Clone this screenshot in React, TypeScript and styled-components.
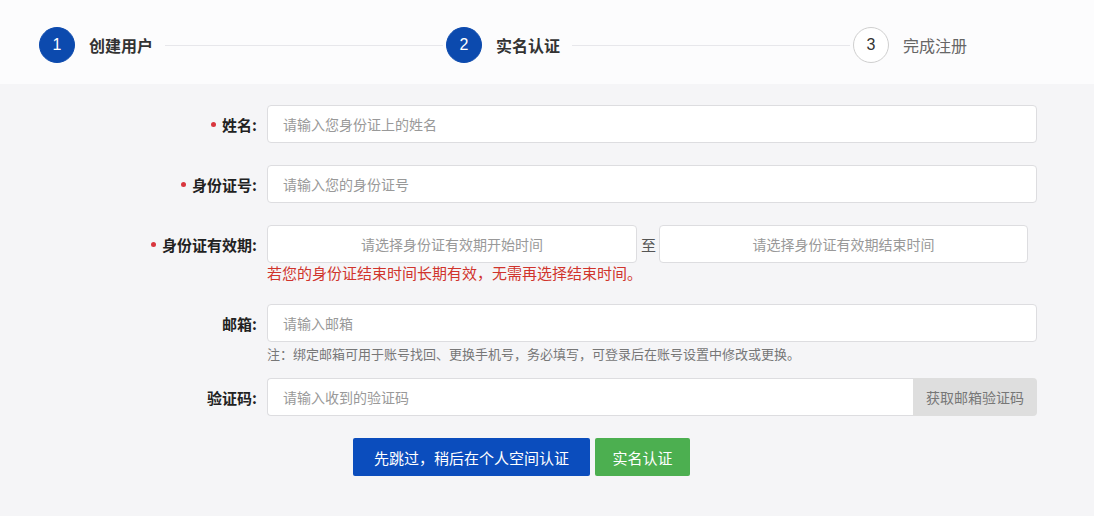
import React from 'react';
import styled, { createGlobalStyle } from 'styled-components';

const GlobalStyle = createGlobalStyle`
  html, body {
    margin: 0;
    padding: 0;
    background-color: #f5f5f7;
    font-family: "Noto Sans CJK SC", "Noto Sans", sans-serif;
    color: #333;
  }
  * {
    box-sizing: border-box;
  }
`;

const Page = styled.div`
  width: 1094px;
  min-height: 516px;
  background-color: #f5f5f7;
`;

const Header = styled.div`
  height: 84px;
  background-color: #fcfcfd;
  display: flex;
  align-items: center;
  padding: 6px 0 0 39px;
`;

const Step = styled.div<{ $last?: boolean }>`
  display: flex;
  align-items: center;
  flex: ${(p) => (p.$last ? '1 1 auto' : '0 0 407px')};
`;

const Circle = styled.div<{ $active?: boolean }>`
  width: 36px;
  height: 36px;
  border-radius: 50%;
  flex-shrink: 0;
  display: flex;
  align-items: center;
  justify-content: center;
  font-family: "Liberation Sans", Arial, sans-serif;
  font-size: 16px;
  background-color: ${(p) => (p.$active ? '#0c4aae' : '#fff')};
  color: ${(p) => (p.$active ? '#fff' : '#333')};
  border: 1px solid ${(p) => (p.$active ? '#0c4aae' : '#cfcfcf')};
`;

const StepLabel = styled.span<{ $active?: boolean }>`
  margin-left: 14px;
  font-size: 16px;
  white-space: nowrap;
  font-weight: ${(p) => (p.$active ? 700 : 400)};
  color: ${(p) => (p.$active ? '#333' : '#666')};
`;

const StepLine = styled.div`
  flex: 1;
  height: 1px;
  margin: 0 3px 0 12px;
  background-color: #e7e7eb;
`;

const Form = styled.div`
  padding-top: 21px;
  display: grid;
  grid-template-columns: 257px 770px;
  column-gap: 10px;
`;

const Label = styled.div`
  height: 38px;
  display: flex;
  align-items: center;
  justify-content: flex-end;
  font-size: 15px;
  font-weight: 700;
  color: #222;
  white-space: nowrap;
`;

const Required = styled.span`
  display: inline-block;
  width: 5px;
  height: 5px;
  border-radius: 50%;
  background-color: #d9363e;
  margin-right: 6px;
`;

const Field = styled.div<{ $after?: number }>`
  margin-bottom: ${(p) => (p.$after ?? 22)}px;
`;

const TextInput = styled.input<{ $center?: boolean }>`
  display: block;
  width: 100%;
  height: 38px;
  padding: 0 15px;
  border: 1px solid #dddde0;
  border-radius: 4px;
  background-color: #fff;
  font-family: inherit;
  font-size: 14px;
  color: #333;
  outline: none;
  text-align: ${(p) => (p.$center ? 'center' : 'left')};

  &::placeholder {
    color: #999;
  }
`;

const DateRow = styled.div`
  display: flex;
  align-items: center;
`;

const DateBox = styled.div<{ $w: number }>`
  flex: 0 0 ${(p) => p.$w}px;
`;

const Sep = styled.span`
  font-size: 15px;
  color: #555;
  padding: 0 3px 0 4px;
`;

const Hint = styled.div`
  height: 19px;
  line-height: 20px;
  font-size: 15px;
  color: #d0342c;
  white-space: nowrap;
`;

const Note = styled.div`
  padding-top: 3px;
  line-height: 18px;
  font-size: 13px;
  color: #777;
  white-space: nowrap;
`;

const CodeRow = styled.div`
  display: flex;
  height: 38px;

  ${TextInput} {
    flex: 1;
    border-radius: 4px 0 0 4px;
    border-right: none;
  }
`;

const CodeButton = styled.button`
  flex: 0 0 124px;
  border: none;
  border-radius: 0 4px 4px 0;
  background-color: #dedede;
  color: #777;
  font-family: inherit;
  font-size: 14px;
  cursor: pointer;
`;

const Actions = styled.div`
  display: flex;
  gap: 5px;
  padding-left: 86px;
`;

const Button = styled.button<{ $variant: 'primary' | 'success' }>`
  height: 38px;
  padding: 0 16px;
  border: none;
  border-radius: 2px;
  color: #fff;
  font-family: inherit;
  font-size: 15px;
  cursor: pointer;
  background-color: ${(p) => (p.$variant === 'primary' ? '#0b4dbd' : '#4caf50')};
  width: ${(p) => (p.$variant === 'primary' ? '237px' : '95px')};
`;

const steps = [
  { no: 1, title: '创建用户', done: true },
  { no: 2, title: '实名认证', done: true },
  { no: 3, title: '完成注册', done: false },
];

const App: React.FC = () => {
  return (
    <Page>
      <GlobalStyle />
      <Header>
        {steps.map((s, i) => (
          <Step key={s.no} $last={i === steps.length - 1}>
            <Circle $active={s.done}>{s.no}</Circle>
            <StepLabel $active={s.done}>{s.title}</StepLabel>
            {i < steps.length - 1 && <StepLine />}
          </Step>
        ))}
      </Header>

      <Form>
        <Label>
          <Required />姓名:
        </Label>
        <Field>
          <TextInput placeholder="请输入您身份证上的姓名" />
        </Field>

        <Label>
          <Required />身份证号:
        </Label>
        <Field>
          <TextInput placeholder="请输入您的身份证号" />
        </Field>

        <Label>
          <Required />身份证有效期:
        </Label>
        <Field>
          <DateRow>
            <DateBox $w={370}>
              <TextInput $center placeholder="请选择身份证有效期开始时间" />
            </DateBox>
            <Sep>至</Sep>
            <DateBox $w={369}>
              <TextInput $center placeholder="请选择身份证有效期结束时间" />
            </DateBox>
          </DateRow>
          <Hint>若您的身份证结束时间长期有效，无需再选择结束时间。</Hint>
        </Field>

        <Label>邮箱:</Label>
        <Field $after={15}>
          <TextInput placeholder="请输入邮箱" />
          <Note>注：绑定邮箱可用于账号找回、更换手机号，务必填写，可登录后在账号设置中修改或更换。</Note>
        </Field>

        <Label>验证码:</Label>
        <Field>
          <CodeRow>
            <TextInput placeholder="请输入收到的验证码" />
            <CodeButton>获取邮箱验证码</CodeButton>
          </CodeRow>
        </Field>

        <div />
        <Actions>
          <Button $variant="primary">先跳过，稍后在个人空间认证</Button>
          <Button $variant="success">实名认证</Button>
        </Actions>
      </Form>
    </Page>
  );
};

export default App;
